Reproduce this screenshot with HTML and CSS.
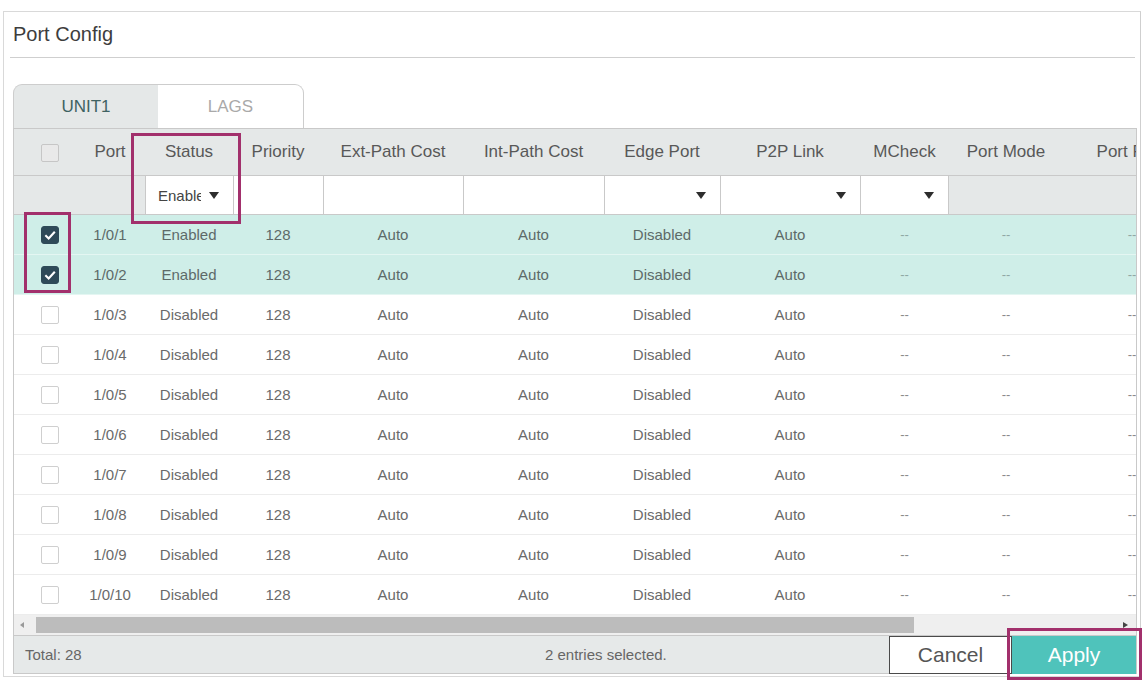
FILE: index.html
```html
<!DOCTYPE html>
<html>
<head>
<meta charset="utf-8">
<title>Port Config</title>
<link rel="stylesheet" href="styles.css">
</head>
<body>
<div class="panel">
  <div class="title">Port Config</div>
  <div class="tabs">
    <div class="tab active">UNIT1</div>
    <div class="tab">LAGS</div>
  </div>
  <div class="grid">
    <div class="viewport">
      <table class="tbl">
        <colgroup>
          <col class="c-cb"><col class="c-port"><col class="c-status"><col class="c-prio"><col class="c-ext"><col class="c-int"><col class="c-edge"><col class="c-p2p"><col class="c-mcheck"><col class="c-pmode"><col class="c-prole">
        </colgroup>
        <thead>
          <tr class="hdr">
            <th><span class="cb cb-head"></span></th>
            <th class="port">Port</th>
            <th>Status</th>
            <th>Priority</th>
            <th>Ext-Path Cost</th>
            <th>Int-Path Cost</th>
            <th>Edge Port</th>
            <th>P2P Link</th>
            <th>MCheck</th>
            <th>Port Mode</th>
            <th>Port Role</th>
          </tr>
          <tr class="flt">
            <td></td>
            <td></td>
            <td class="f"><span class="sel"><span class="sel-txt">Enable</span><svg class="arr" viewBox="0 0 10 7"><path d="M0 0H10L5 7Z"/></svg></span></td>
            <td class="f"></td>
            <td class="f"></td>
            <td class="f"></td>
            <td class="f dd"><svg class="arr" viewBox="0 0 10 7"><path d="M0 0H10L5 7Z"/></svg></td>
            <td class="f dd"><svg class="arr" viewBox="0 0 10 7"><path d="M0 0H10L5 7Z"/></svg></td>
            <td class="f dd fl"><svg class="arr" viewBox="0 0 10 7"><path d="M0 0H10L5 7Z"/></svg></td>
            <td></td>
            <td></td>
          </tr>
        </thead>
        <tbody>
          <tr class="on"><td><span class="cb checked"><svg viewBox="0 0 12 12"><path d="M2.5 6.2L5 8.6L9.6 3.6"/></svg></span></td><td class="port">1/0/1</td><td>Enabled</td><td>128</td><td>Auto</td><td>Auto</td><td>Disabled</td><td>Auto</td><td class="dash">--</td><td class="dash">--</td><td class="dash">--</td></tr>
          <tr class="on"><td><span class="cb checked"><svg viewBox="0 0 12 12"><path d="M2.5 6.2L5 8.6L9.6 3.6"/></svg></span></td><td class="port">1/0/2</td><td>Enabled</td><td>128</td><td>Auto</td><td>Auto</td><td>Disabled</td><td>Auto</td><td class="dash">--</td><td class="dash">--</td><td class="dash">--</td></tr>
          <tr><td><span class="cb"></span></td><td class="port">1/0/3</td><td>Disabled</td><td>128</td><td>Auto</td><td>Auto</td><td>Disabled</td><td>Auto</td><td class="dash">--</td><td class="dash">--</td><td class="dash">--</td></tr>
          <tr><td><span class="cb"></span></td><td class="port">1/0/4</td><td>Disabled</td><td>128</td><td>Auto</td><td>Auto</td><td>Disabled</td><td>Auto</td><td class="dash">--</td><td class="dash">--</td><td class="dash">--</td></tr>
          <tr><td><span class="cb"></span></td><td class="port">1/0/5</td><td>Disabled</td><td>128</td><td>Auto</td><td>Auto</td><td>Disabled</td><td>Auto</td><td class="dash">--</td><td class="dash">--</td><td class="dash">--</td></tr>
          <tr><td><span class="cb"></span></td><td class="port">1/0/6</td><td>Disabled</td><td>128</td><td>Auto</td><td>Auto</td><td>Disabled</td><td>Auto</td><td class="dash">--</td><td class="dash">--</td><td class="dash">--</td></tr>
          <tr><td><span class="cb"></span></td><td class="port">1/0/7</td><td>Disabled</td><td>128</td><td>Auto</td><td>Auto</td><td>Disabled</td><td>Auto</td><td class="dash">--</td><td class="dash">--</td><td class="dash">--</td></tr>
          <tr><td><span class="cb"></span></td><td class="port">1/0/8</td><td>Disabled</td><td>128</td><td>Auto</td><td>Auto</td><td>Disabled</td><td>Auto</td><td class="dash">--</td><td class="dash">--</td><td class="dash">--</td></tr>
          <tr><td><span class="cb"></span></td><td class="port">1/0/9</td><td>Disabled</td><td>128</td><td>Auto</td><td>Auto</td><td>Disabled</td><td>Auto</td><td class="dash">--</td><td class="dash">--</td><td class="dash">--</td></tr>
          <tr><td><span class="cb"></span></td><td class="port">1/0/10</td><td>Disabled</td><td>128</td><td>Auto</td><td>Auto</td><td>Disabled</td><td>Auto</td><td class="dash">--</td><td class="dash">--</td><td class="dash">--</td></tr>
        </tbody>
      </table>
    </div>
    <div class="scroll">
      <span class="sarrow left"></span>
      <div class="thumb"></div>
      <span class="sarrow right"></span>
    </div>
    <div class="foot">
      <div class="total">Total: 28</div>
      <div class="selected">2 entries selected.</div>
      <button class="btn cancel">Cancel</button>
      <button class="btn apply">Apply</button>
    </div>
  </div>
</div>
<div class="mark mark-status"></div>
<div class="mark mark-check"></div>
<div class="mark mark-apply"></div>
</body>
</html>
```

FILE: styles.css
```css
html, body {
  margin: 0;
  padding: 0;
  background: #fff;
  font-family: "Liberation Sans", Arial, sans-serif;
  color: #555;
}

.panel {
  margin: 11px 0 0 3px;
  width: 1138px;
  height: 666px;
  box-sizing: border-box;
  border: 1px solid #d9d9d9;
  border-right-color: #cfcfcf;
  padding: 0 5px 0 6px;
}

.title {
  height: 46px;
  box-sizing: border-box;
  line-height: 44px;
  padding-left: 3px;
  font-size: 20px;
  color: #3d3d3d;
  border-bottom: 1px solid #cfcfcf;
}

.tabs {
  display: flex;
  margin: 26px 0 0 3px;
  height: 44px;
}

.tab {
  width: 146px;
  box-sizing: border-box;
  border: 1px solid #cdcdcd;
  border-bottom: none;
  border-left: none;
  border-radius: 0 9px 0 0;
  background: #fff;
  color: #a9a9a9;
  font-size: 17px;
  text-align: center;
  line-height: 44px;
}

.tab.active {
  width: 145px;
  border-left: 1px solid #cdcdcd;
  border-right: none;
  border-radius: 9px 0 0 0;
  background: #e5e8e8;
  color: #3f6262;
}

.grid {
  margin-left: 3px;
  width: 1124px;
  box-sizing: border-box;
  border: 1px solid #c9c9c9;
  position: relative;
}

.viewport {
  overflow: hidden;
  width: 1122px;
}

.tbl {
  table-layout: fixed;
  width: 1187px;
  border-collapse: separate;
  border-spacing: 0;
}

.c-cb { width: 71px; }
.c-port { width: 60px; }
.c-status { width: 88px; }
.c-prio { width: 90px; }
.c-ext { width: 140px; }
.c-int { width: 141px; }
.c-edge { width: 116px; }
.c-p2p { width: 140px; }
.c-mcheck { width: 89px; }
.c-pmode { width: 114px; }
.c-prole { width: 138px; }

.tbl th, .tbl td {
  padding: 0;
  text-align: center;
  white-space: nowrap;
  overflow: hidden;
  box-sizing: border-box;
}

.hdr th {
  height: 46px;
  background: #e5e8e8;
  font-weight: normal;
  font-size: 17px;
  color: #585858;
}

.port { padding-right: 10px !important; }

.flt td {
  height: 40px;
  background: #e5e8e8;
  border-top: 1px solid #c9c9c9;
  border-bottom: 1px solid #c9c9c9;
}

.flt td.f {
  background: #fff;
  border-left: 1px solid #c9c9c9;
}

.flt td.fl {
  border-right: 1px solid #c9c9c9;
}

.flt td.dd {
  text-align: right;
  padding-right: 14px;
}

.arr {
  width: 10px;
  height: 7px;
  fill: #2d2d2d;
  vertical-align: middle;
}

.sel {
  display: flex;
  align-items: center;
  padding-left: 12px;
  gap: 8px;
}

.sel-txt {
  display: inline-block;
  width: 43px;
  overflow: hidden;
  text-align: left;
  font-size: 15px;
  color: #444;
}

tbody td {
  height: 40px;
  font-size: 15px;
  color: #6a6a6a;
  border-bottom: 1px solid #ececec;
}

tbody tr.on td {
  background: #cfeee8;
  border-bottom-color: #e4f6f2;
  color: #5d6a68;
}

td.dash {
  color: #8a8a8a;
  font-size: 13px;
}

tbody tr.on td.dash {
  color: #8fa8a4;
}

.cb {
  display: inline-block;
  width: 18px;
  height: 18px;
  box-sizing: border-box;
  border: 1px solid #cfcfcf;
  border-radius: 2px;
  background: #fff;
  vertical-align: middle;
}

.cb-head {
  background: #e9e9e9;
  border-color: #c6c6c6;
}

.cb.checked {
  background: #2e4a58;
  border-color: #2e4a58;
  border-radius: 3px;
}

.cb.checked svg {
  display: block;
  width: 16px;
  height: 16px;
  fill: none;
  stroke: #fff;
  stroke-width: 1.6;
}

.scroll {
  height: 20px;
  background: #efefef;
  display: flex;
  align-items: center;
}

.sarrow {
  width: 0;
  height: 0;
  border-top: 3px solid transparent;
  border-bottom: 3px solid transparent;
}

.sarrow.left {
  border-right: 4px solid #9a9a9a;
  margin: 0 12px 0 6px;
}

.sarrow.right {
  border-left: 5px solid #444;
  margin-left: auto;
  margin-right: 8px;
}

.thumb {
  width: 878px;
  height: 16px;
  background: #bcbcbc;
}

.foot {
  height: 37px;
  border-top: 1px solid #c9c9c9;
  background: #e6e9e9;
  display: flex;
  align-items: flex-start;
  font-size: 15px;
  color: #666;
}

.total {
  width: 531px;
  padding-left: 11px;
  box-sizing: border-box;
  line-height: 37px;
}

.selected {
  flex: 1;
  line-height: 37px;
}

.btn {
  height: 38px;
  margin: 0;
  font-family: "Liberation Sans", Arial, sans-serif;
  font-size: 21px;
  box-sizing: border-box;
  cursor: pointer;
}

.cancel {
  width: 123px;
  background: #fff;
  border: 1px solid #4a4a4a;
  color: #555;
}

.apply {
  width: 124px;
  background: #4fc3bb;
  border: none;
  color: #fff;
}

.mark {
  position: absolute;
  box-sizing: border-box;
  border: 3px solid #a2306c;
  pointer-events: none;
}

.mark-status {
  left: 131px;
  top: 133px;
  width: 110px;
  height: 91px;
}

.mark-check {
  left: 24px;
  top: 212px;
  width: 47px;
  height: 81px;
}

.mark-apply {
  left: 1007px;
  top: 628px;
  width: 135px;
  height: 52px;
}
```
